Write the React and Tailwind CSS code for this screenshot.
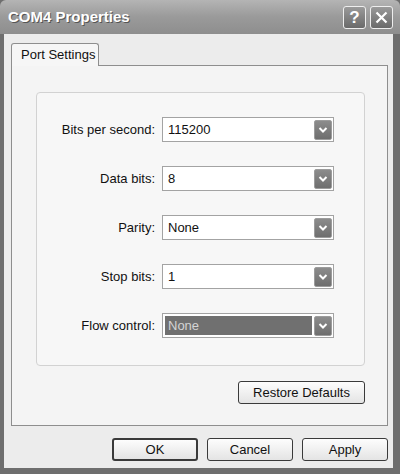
import React from 'react';

const font = { fontFamily: '"Liberation Sans", Arial, sans-serif' };

// Kotak pilihan (combo) dengan tombol panah
function Combo({ value, selected }) {
  return (
    <div className="w-[172px] h-[25px] border border-[#a3a3a3] bg-white flex items-center">
      <div
        className={`flex-1 h-[19px] ml-[2px] mr-[2px] flex items-center pl-[3px] text-[13px] ${
          selected ? 'bg-[#707070] text-[#d4d4d4]' : 'text-[#111]'
        }`}
      >
        {value}
      </div>
      <div className="w-[18px] h-[20px] mr-[1px] rounded-[2px] bg-gradient-to-b from-[#8c8c8c] to-[#6e6e6e] border border-[#9c9c9c] flex items-center justify-center">
        <svg width="10" height="8" viewBox="0 0 10 8">
          <path d="M1.5 2 L5 5.5 L8.5 2" stroke="#fff" strokeWidth="2" fill="none" />
        </svg>
      </div>
    </div>
  );
}

function Row({ label, value, selected }) {
  return (
    <div className="flex items-center h-[25px]">
      <div className="w-[125px] text-right text-[13px] text-[#111] pr-[7px]">{label}</div>
      <Combo value={value} selected={selected} />
    </div>
  );
}

function Btn({ children, wide, isDefault }) {
  return (
    <div
      className={`h-[23px] rounded-[3px] bg-gradient-to-b from-[#fdfdfd] to-[#e4e4e4] flex items-center justify-center text-[13px] text-[#111] ${
        wide ? 'w-[127px]' : 'w-[86px]'
      } ${isDefault ? 'border-2 border-[#3a3a3a]' : 'border border-[#3a3a3a]'}`}
    >
      {children}
    </div>
  );
}

export default function App() {
  return (
    <div className="w-[400px] h-[474px] bg-[#6e6e6e] flex flex-col overflow-hidden" style={font}>
      {/* Title bar */}
      <div className="h-[34px] shrink-0 rounded-t-[6px] bg-gradient-to-b from-[#b4b4b4] via-[#9a9a9a] to-[#8e8e8e] flex items-center pl-[8px] pr-[7px]">
        <span
          className="flex-1 text-[15px] font-bold text-white"
          style={{ textShadow: '1px 1px 0 #555' }}
        >
          COM4 Properties
        </span>
        <div className="flex gap-[4px]">
          <div className="w-[23px] h-[23px] rounded-[3px] border border-[#eee] bg-gradient-to-b from-[#9a9a9a] to-[#6a6a6a] flex items-center justify-center text-white font-bold text-[17px] leading-none">
            ?
          </div>
          <div className="w-[23px] h-[23px] rounded-[3px] border border-[#eee] bg-gradient-to-b from-[#9a9a9a] to-[#6a6a6a] flex items-center justify-center">
            <svg width="13" height="13" viewBox="0 0 13 13">
              <path d="M1.5 1.5 L11.5 11.5 M11.5 1.5 L1.5 11.5" stroke="#fff" strokeWidth="2.2" />
            </svg>
          </div>
        </div>
      </div>

      {/* Body */}
      <div className="flex-1 ml-[4px] mr-[7px] mb-[6px] bg-[#ececec] flex flex-col pl-[7px] pr-[5px] pt-[8px]">
        {/* Tab */}
        <div className="flex">
          <div className="h-[23px] w-[88px] rounded-t-[3px] border border-b-0 border-[#8e8e8e] bg-[#f6f6f6] flex items-center pl-[9px] text-[13px] text-[#111] relative top-[1px]">
            Port Settings
          </div>
        </div>

        {/* Panel */}
        <div className="h-[361px] border border-[#8e8e8e] bg-[#f4f4f4] flex flex-col pl-[24px] pr-[22px] pt-[26px]">
          <div className="h-[274px] rounded-[4px] border border-[#d2d2d2] bg-[#f7f7f7] pt-[24px] flex flex-col gap-[24px]">
            <Row label="Bits per second:" value="115200" />
            <Row label="Data bits:" value="8" />
            <Row label="Parity:" value="None" />
            <Row label="Stop bits:" value="1" />
            <Row label="Flow control:" value="None" selected />
          </div>
          <div className="flex justify-end mt-[15px]">
            <Btn wide>Restore Defaults</Btn>
          </div>
        </div>

        {/* Buttons */}
        <div className="flex justify-end gap-[9px] mt-[12px]">
          <Btn isDefault>OK</Btn>
          <Btn>Cancel</Btn>
          <Btn>Apply</Btn>
        </div>
      </div>
    </div>
  );
}
